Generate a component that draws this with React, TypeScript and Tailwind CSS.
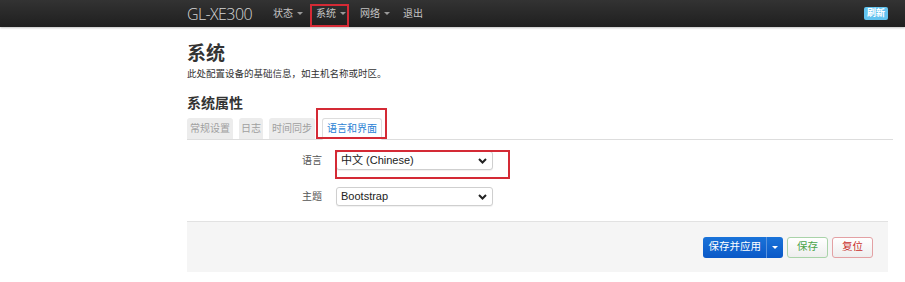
import React from 'react'

const cjk = { fontFamily: '"Liberation Sans", "Noto Sans CJK SC", sans-serif' }

function Caret() {
  return <span className="ml-[4px] inline-block border-x-[3px] border-t-[3px] border-x-transparent border-t-[#9a9a9a] align-middle" />
}

function Chevron() {
  return (
    <svg width="9" height="6" viewBox="0 0 9 6" className="shrink-0">
      <path d="M1 1l3.5 3.5L8 1" fill="none" stroke="#222" strokeWidth="2" />
    </svg>
  )
}

function FakeSelect({ value }: { value: string }) {
  return (
    <div className="flex h-[19px] w-[157px] items-center justify-between rounded-[3px] border border-[#cfcfcf] bg-white pl-[4px] pr-[5px] text-[11px] text-[#222] shadow-[0_1px_1px_rgba(0,0,0,0.06)]">
      <span>{value}</span>
      <Chevron />
    </div>
  )
}

// red annotation frame drawn over an element
function Mark({ className }: { className: string }) {
  return <span className={'pointer-events-none absolute border-2 border-solid border-[#d42a35] ' + className} />
}

export default function App() {
  return (
    <div className="h-[282px] w-[905px] overflow-hidden bg-white" style={cjk}>
      {/* navbar */}
      <div className="flex h-[27px] items-center bg-gradient-to-b from-[#333] to-[#1f1f1f] pl-[187px] pr-[17px] shadow-[0_1px_2px_rgba(0,0,0,0.25)]">
        <div className="mr-[21px] text-[16px] font-light tracking-[-0.6px] text-[#d6d6d6]" style={{ fontFamily: '"Open Sans", "Liberation Sans", sans-serif' }}>
          GL-XE300
        </div>
        <div className="flex h-full items-center text-[10px] text-[#c4c4c4]">
          <span className="flex items-center">状态<Caret /></span>
          <span className="relative ml-[7px] flex h-full items-center pl-[6px] pr-[3px]">
            系统<Caret />
            <Mark className="inset-x-0 top-[4px] bottom-0" />
          </span>
          <span className="ml-[11px] flex items-center">网络<Caret /></span>
          <span className="ml-[13px]">退出</span>
        </div>
        <span className="ml-auto rounded-[2px] bg-[#62c3ef] px-[3px] py-[1px] text-[9px] font-bold leading-[11px] text-white">刷新</span>
      </div>

      <div className="pl-[187px] pr-[12px]">
        <h2 className="mt-[16px] text-[19px] font-bold leading-[22px] text-[#333]">系统</h2>
        <p className="mt-[3px] text-[9.5px] leading-[12px] text-[#333]">此处配置设备的基础信息，如主机名称或时区。</p>
        <h3 className="mt-[15px] text-[14px] font-bold leading-[17px] text-[#333]">系统属性</h3>

        {/* tabs */}
        <div className="mt-[6px] flex items-end gap-[6px] border-b border-[#ddd] text-[10px]">
          <span className="rounded-t-[3px] bg-[#ececec] px-[3px] pb-[3px] pt-[3px] text-[#a0a0a0]">常规设置</span>
          <span className="rounded-t-[3px] bg-[#ececec] px-[2px] pb-[3px] pt-[3px] text-[#a0a0a0]">日志</span>
          <span className="rounded-t-[3px] bg-[#ececec] px-[3px] pb-[3px] pt-[3px] text-[#a0a0a0]">时间同步</span>
          <span className="relative ml-[1px] -mb-px rounded-t-[3px] border border-b-white border-[#ddd] bg-white px-[4px] pb-[3px] pt-[2px] text-[#2a7fd4]">
            语言和界面
            <Mark className="-left-[7px] -right-[6px] -top-[11px] bottom-0" />
          </span>
        </div>

        {/* form */}
        <div className="mt-[11px] flex flex-col gap-[17px] text-[10px] text-[#555]">
          <div className="flex items-center">
            <span className="w-[149px] pr-[14px] text-right">语言</span>
            <div className="relative">
              <FakeSelect value="中文 (Chinese)" />
              <Mark className="-left-[1px] -right-[17px] -top-[1px] -bottom-[9px]" />
            </div>
          </div>
          <div className="flex items-center">
            <span className="w-[149px] pr-[14px] text-right">主题</span>
            <FakeSelect value="Bootstrap" />
          </div>
        </div>

        {/* actions */}
        <div className="mt-[15px] mr-[5px] flex h-[51px] items-center justify-end gap-[4px] border-t border-[#e2e2e2] bg-[#f5f5f5] pr-[15px] text-[10.5px]">
          <div className="flex h-[21px] overflow-hidden rounded-[3px] bg-gradient-to-b from-[#1a73d9] to-[#0a58c7] text-white">
            <span className="flex items-center pl-[6px] pr-[5px]">保存并应用</span>
            <span className="flex w-[17px] items-center justify-center border-l border-[#5a93dd]">
              <span className="inline-block border-x-[3px] border-t-[3px] border-x-transparent border-t-white" />
            </span>
          </div>
          <span className="flex h-[21px] w-[41px] items-center justify-center rounded-[3px] border border-[#a9d3a9] bg-gradient-to-b from-white to-[#eee] text-[#4aa44a]">保存</span>
          <span className="flex h-[21px] w-[41px] items-center justify-center rounded-[3px] border border-[#e3a1a4] bg-gradient-to-b from-white to-[#eee] text-[#c9302c]">复位</span>
        </div>
      </div>
    </div>
  )
}
